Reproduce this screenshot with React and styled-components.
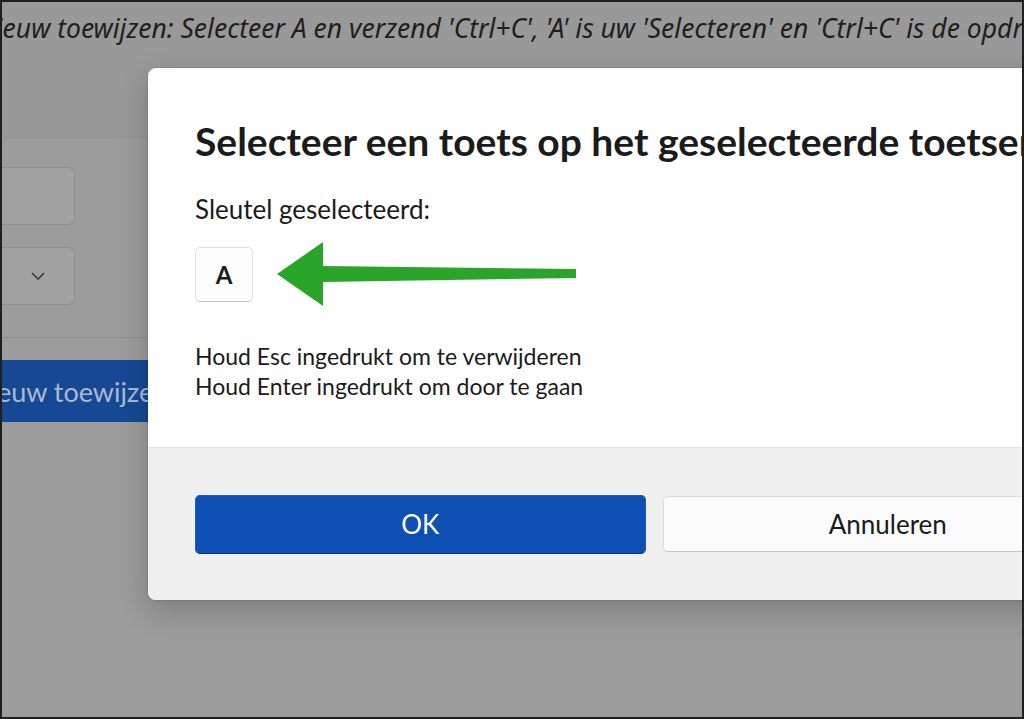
import React from 'react';
import styled, { createGlobalStyle } from 'styled-components';

const GlobalStyle = createGlobalStyle`
  html, body {
    margin: 0;
    padding: 0;
    overflow: hidden;
    background: #1e1e1e;
  }
  * {
    box-sizing: border-box;
  }
`;

const Frame = styled.div`
  position: relative;
  width: 1024px;
  height: 719px;
  overflow: hidden;
  border: 2px solid #1f1f1f;
  background: #999999;
  font-family: Lato, "Noto Sans", sans-serif;
`;

const Caption = styled.div`
  height: 135px;
  padding-top: 11px;
  margin-left: -25px;
  white-space: nowrap;
  font-family: "Noto Sans", sans-serif;
  font-style: italic;
  font-size: 26.5px;
  line-height: 30px;
  color: #1f1f1f;
`;

const Panel = styled.div`
  height: 100%;
  border-top: 1px solid #929292;
  background: #9c9c9c;
  padding-top: 29px;
  display: flex;
  flex-direction: column;
`;

const Field = styled.div`
  width: 275px;
  height: 58px;
  margin-left: -202px;
  margin-bottom: 22px;
  border: 1px solid #8d8d8d;
  border-radius: 6px;
  background: #a1a1a1;
  display: flex;
  align-items: center;
  justify-content: flex-end;
  padding-right: 28px;
  color: #3e3e3e;
`;

const Divider = styled.div`
  height: 1px;
  margin-top: 10px;
  background: #8e8e8e;
`;

const AssignButton = styled.div`
  width: 360px;
  height: 62px;
  margin-top: 22px;
  margin-left: -32px;
  background: #164894;
  color: #aab9d2;
  font-size: 27px;
  display: flex;
  align-items: center;
  white-space: nowrap;
`;

const Dialog = styled.div`
  position: absolute;
  left: 146px;
  top: 66px;
  width: 1012px;
  border-radius: 8px;
  overflow: hidden;
  background: #ffffff;
  box-shadow: 0 10px 30px rgba(0, 0, 0, 0.22), 0 0 0 1px rgba(0, 0, 0, 0.08);
  display: flex;
  flex-direction: column;
`;

const Body = styled.div`
  height: 379px;
  padding: 49px 47px 0;
  color: #1b1b1b;
`;

const Title = styled.h1`
  margin: 0;
  font-size: 39px;
  line-height: 48px;
  font-weight: 700;
  white-space: nowrap;
`;

const Label = styled.div`
  margin-top: 28px;
  font-size: 26px;
  line-height: 32px;
`;

const KeyRow = styled.div`
  display: flex;
  align-items: center;
  margin-top: 17px;
  height: 64px;
`;

const KeyCap = styled.div`
  width: 58px;
  height: 55px;
  border: 1px solid #dedede;
  border-bottom-color: #c8c8c8;
  border-radius: 5px;
  background: #fdfdfd;
  display: flex;
  align-items: center;
  justify-content: center;
  font-size: 24px;
  font-weight: 700;
`;

const Arrow = styled.svg`
  margin-left: 22px;
`;

const Hints = styled.div`
  margin-top: 35px;
  font-size: 23px;
  line-height: 30px;
`;

const Footer = styled.div`
  height: 153px;
  background: #f0f0f0;
  border-top: 1px solid #e2e2e2;
  display: flex;
  align-items: center;
  gap: 17px;
  padding: 0 47px;
`;

const Button = styled.div`
  flex: 1;
  height: ${p => (p.primary ? '59px' : '56px')};
  border-radius: 5px;
  display: flex;
  align-items: center;
  justify-content: center;
  font-size: 26px;
  background: ${p => (p.primary ? '#0d4fb3' : '#fbfbfb')};
  color: ${p => (p.primary ? '#ffffff' : '#1b1b1b')};
  border: 1px solid ${p => (p.primary ? '#1b5cc0' : '#dcdcdc')};
  border-bottom-color: ${p => (p.primary ? '#083a86' : '#c6c6c6')};
`;

const Chevron = () => (
  <svg width="16" height="10" viewBox="0 0 16 10">
    <path d="M2 2 L8 8 L14 2" fill="none" stroke="#3c3c3c" strokeWidth="1.6" />
  </svg>
);

export default function App() {
  return (
    <>
      <GlobalStyle />
      <Frame>
        <Caption>
          Nieuw toewijzen: Selecteer A en verzend 'Ctrl+C', 'A' is uw 'Selecteren' en 'Ctrl+C' is de opdracht
        </Caption>
        <Panel>
          <Field />
          <Field>
            <Chevron />
          </Field>
          <Divider />
          <AssignButton>Nieuw toewijzen</AssignButton>
        </Panel>

        <Dialog>
          <Body>
            <Title>Selecteer een toets op het geselecteerde toetsenbord</Title>
            <Label>Sleutel geselecteerd:</Label>
            <KeyRow>
              <KeyCap>A</KeyCap>
              <Arrow width="302" height="64" viewBox="0 0 302 64">
                <polygon
                  points="2,32 48,0 48,24 301,27 301,36 48,40 48,64"
                  fill="#2aa52a"
                />
              </Arrow>
            </KeyRow>
            <Hints>
              Houd Esc ingedrukt om te verwijderen
              <br />
              Houd Enter ingedrukt om door te gaan
            </Hints>
          </Body>
          <Footer>
            <Button primary>OK</Button>
            <Button>Annuleren</Button>
          </Footer>
        </Dialog>
      </Frame>
    </>
  );
}
